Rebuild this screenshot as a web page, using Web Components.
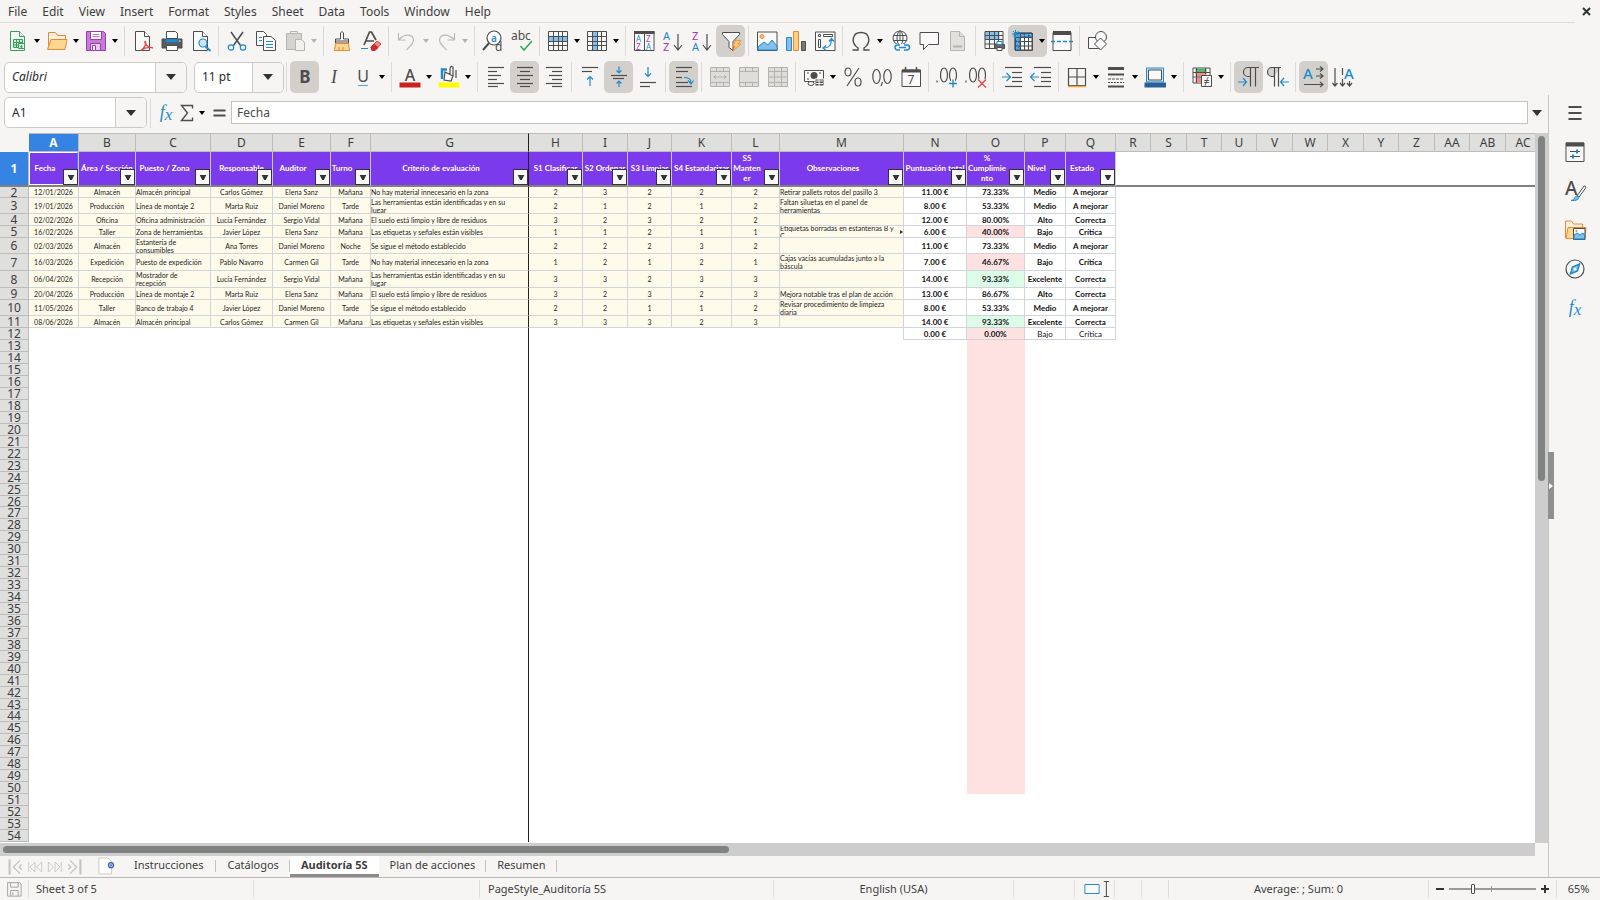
<!DOCTYPE html>
<html lang="en">
<head>
<meta charset="utf-8">
<title>Auditoría 5S - LibreOffice Calc</title>
<style>
html,body{margin:0;height:100%}
body{background:#f6f5f4;color:#3d3d3d;font:12px/16px "Noto Sans","Open Sans",sans-serif;overflow:hidden}
</style>
</head>
<body>
<calc-app></calc-app>
<script>
const K='#4d4d4d',B='#1e8bcd',L='#83beec',O='#ed8733',G='#b4b3b1';
const T=(x,y,s,t,c=K,extra='')=>`<text x="${x}" y="${y}" font-size="${s}" fill="${c}" stroke="none" ${extra}>${t}</text>`;
const P=(d,c=K,f='none',w=1)=>`<path d="${d}" stroke="${c}" fill="${f}" stroke-width="${w}"/>`;
const grid=c=>P('M2.5 2.5h19v19h-19zM7.5 2.5v19M12.5 2.5v19M16.5 2.5v19M2.5 7.5h19M2.5 12.5h19M2.5 16.5h19',c,'none');
const doc=(c,f='#fafafa')=>P('M4.5 2.5h9l5 5v14h-14z',c,f)+P('M13.5 2.5v5h5',c,f);
const lines=(a,c=K)=>a.map(([x,w,y])=>`<path d="M${x} ${y}.5h${w}" stroke="${c}" stroke-width="1.2" fill="none"/>`).join('');
const mergeIc=m=>P('M2.5 2.5h19v19h-19zM2.5 6.5h19M2.5 17.5h19M8.5 2.5v4M15.5 2.5v4M8.5 17.5v4M15.5 17.5v4','#b5b3b0','#dfddda')+m;
const ICONS={
new:doc('#3a9e5a','#f4fbf6')+P('M7.5 10.5h9v8h-9zM10.5 10.5v8M13.5 10.5v8M7.5 13.5h9M7.5 16h6','#3a9e5a','#cdebd6')+P('M12.5 14.5h6v5h-6z','#3a9e5a','#dff3e5')+P('M14 17.5l2-1.5v3z','#3a9e5a','#3a9e5a',.5),
open:P('M3.5 20.5v-17h7l2 3h8v4',O,'#fdf1e2')+P('M2.5 20.5l3.5-10h16l-2 10z',O,'#fbd88f'),
save:P('M2.5 2.5h17l2 2v17h-19z','#9a3fae','#c77bd6')+P('M6.5 2.5h11v8h-11z','#9a3fae','#fff')+P('M8.5 5.5h7M8.5 7.5h7','#c77bd6')+P('M6.5 21.5v-7h10v7z','#9a3fae','#e7c8ee')+P('M8.5 16.5h3v5h-3z','#9a3fae','#fff'),
pdf:doc(K)+P('M10 21.5c4-3 5.5-7 4.5-9c-1.5-1-1 5 7.5 6.5c-3-1-8-.5-12 2.5z','#e04848','none',1.3),
print:P('M6.5 2.5h9l2 2v5h-11z',K,'#fafafa')+P('M2 10h20v9h-20z',K,'#5a5a5a')+P('M6 10.5h12v2.5h-12z',B,B,.8)+P('M6.5 16.5h11v5h-11z',K,'#fff')+P('M19 12h1.5','#fff'),
preview:doc(K)+P('M16.5 17.5l5 4.5',B,'none',2)+`<circle cx="14" cy="14" r="4" fill="#cfe6f8" stroke="${B}" stroke-width="1.2"/>`,
cut:P('M6 3l9.5 13.5M18 3L8.5 16.5',K,'none',1.5)+`<g fill="none" stroke="${B}" stroke-width="1.2"><circle cx="6" cy="18.5" r="2.7"/><circle cx="18" cy="18.5" r="2.7"/></g>`,
copy:P('M2.5 2.5h7l3 3v11h-10z',K,'#fafafa')+P('M9.5 7.5h7.5l4.5 4v10h-12z',K,'#fafafa')+P('M5 8.5h3M5 11.5h3',B)+P('M12 12.5h7M12 15.5h7M12 18.5h7',B),
paste:P('M3.5 4.5h15v16h-15z','#b7b5b2','#d5d3d0')+P('M7.5 4.5v-2h7v2z','#b7b5b2','#eee')+P('M12.5 10.5h6l3 3v8h-9z','#b7b5b2','#f2f1f0'),
brush:P('M10.5 10v-6q1.5-3 3 0v6h5v4h-13v-4z',K,'#fafafa')+P('M5.5 14.5h13l1 7h-15z',O,'#fbd88f')+P('M9 21v-3M13 21v-3',O)+P('M5.5 12h13'),
clear:P('M5 16L10.5 3h2L17 11M7 12h8',K,'none',1.7)+P('M2 19.5h7',B)+P('M12 18l6-6 4 3-6 6.5h-3z','#e04848','#f28a8a')+P('M12 18l3-3 4 3.5-3 3h-3z','#c92d2d','#c92d2d'),
undo:P('M3.5 4v7h7M4 10.5C10 4 18 5 18.5 11c0 3-2 5-7 10','#bcbab8','none',1.2),
redo:P('M20.5 4v7h-7M20 10.5C14 4 6 5 5.5 11c0 3 2 5 7 10','#bcbab8','none',1.2),
find:`<circle cx="13" cy="9" r="7" fill="#fff" stroke="${K}" stroke-width="1.2"/>`+P('M8 14l-6 7',K,'none',2)+T(10,13,10,'a',B,'font-weight="600"')+T(14,22,12,'d'),
spell:T(1,11,12,'abc')+P('M10.5 17l3.5 4 8-9','#35a853','none',1.5),
row:P('M2.5 7.5h19v5h-19z',L,L)+grid(K),
col:P('M7.5 2.5h5v19h-5z',L,L)+grid(K),
sort:P('M2.5 2.5h19.5v19h-19.5zM12.5 4v18',K,'#fafafa')+P('M2 3.5h20.5',K,'none',3)+T(4,13,8,'A',B)+T(4,21,8,'Z','#a33ab5')+T(14,13,8,'Z','#a33ab5')+T(14,21,8,'A',B),
asc:T(2,11,11,'A',B)+T(2,22,11,'Z','#a33ab5')+P('M17 5v16M13 16l4 5 4-5',K,'none',1.2),
desc:T(2,11,11,'Z','#a33ab5')+T(2,22,11,'A',B)+P('M17 5v16M13 16l4 5 4-5',K,'none',1.2),
filter:P('M3.5 3.5h17v2l-6.5 7v9l-4-3v-6l-6.5-7z',K,'#fafafa')+P('M17 11l5 .5-3 3.5h3l-8 7 2-5h-3z',O,'#fbc56b',.8),
image:P('M2.5 3h19.5v18.5h-19.5z',K,'#fafafa')+P('M3 21v-3l6-5 4 3 4-5 5 6v4z',B,L)+`<circle cx="7" cy="7.5" r="2" fill="#fbc56b" stroke="${O}"/>`,
chart:P('M2.5 8.5h5v13h-5z',B,L)+P('M9.5 2.5h5v19h-5z',O,'#fbd07d')+P('M17.5 12.5h4v9h-4z',K,'#777'),
pivot:P('M2.5 3h19.5v18.5h-19.5z',K,'#fafafa')+P('M5.5 5.5h2v2h-2zM10.5 5.5h9v2h-9zM5.5 10.5h2v8h-2z')+P('M10 19c7 0 8-3 8.5-9M16 12.5l2.5-3 2.5 3M13 16.5l-3 2.5 3 2.5',B,'none',1.2),
omega:P('M3.5 21h5.5v-2C1.5 14 3 3.5 12 3.5s10.5 10.5 3 15.5v2h5.5',K,'none',1.4),
link:`<g fill="#fafafa" stroke="${K}"><circle cx="12" cy="9" r="7"/><ellipse cx="12" cy="9" rx="3" ry="7"/></g>`+P('M5.5 6.5h13M5.5 11.5h13M12 2v10')+P('M7 15.5h15v6h-15z','#f6f5f4','#f6f5f4')+P('M12 16H9.5a2.5 2.5 0 0 0 0 5H12M16 16h3a2.5 2.5 0 0 1 0 5h-3M11 18.5h7',B,'none',1.5),
comment:P('M3 3.5h18.5v12h-10l-5 5v-5H3z',K,'#fafafa'),
header:doc('#b7b5b2','#e2e0dd')+P('M7 17.5h9',G,'none',2),
parea:P('M3 3h14v7H3z',L,L)+P('M3 2.5h18v17h-18zM7.5 2.5v17M12.5 2.5v17M16.5 2.5v17M3 6.5h18M3 10.5h18M3 15h18')+P('M12.5 15.5h10v4h-10z',K,'#666')+P('M15 12.5h5v3h-5z',B,'#fff')+P('M15 18.5h5v3h-5z',K,'#fff'),
freeze:P('M4 4h17v17H4z',K,'#fafafa')+P('M4 4h17v4H9v13H4z','#1a6fb5','#5aa8e6')+P('M4.5 4.5h17v17h-17zM9.5 4v17M13.5 4v17M17.5 4v17M4.5 8.5h17M4.5 12.5h17M4.5 17h17')+P('M4.5 1v8M1 5h8M2 2l5.5 5.5M7.5 2L2 7.5M5 11l4 4M5 16l4 4M12 5l3 3M17 5l3 3',B),
split:P('M3 3.5h18v18h-18z',K,'#fafafa')+P('M3 4h18',K,'none',4)+P('M1 12.5h22',B,'none',1.5).replace('<path','<path stroke-dasharray="4 2"'),
shapes:P('M2.5 8.5h11v11h-11z',K,'#fafafa')+`<circle cx="15" cy="8" r="5.5" fill="#fafafa" stroke="${K}"/>`+P('M14.5 9l6 6-6 6-6-6z',K,'#fafafa'),
bold:T(12,18,17,'B',K,'font-weight="700" text-anchor="middle"'),
italic:T(12,18,18,'I',K,'font-style="italic" text-anchor="middle" font-family="Liberation Serif"'),
underline:T(12,17,16,'U',K,'text-anchor="middle"')+P('M7 20.5h10','#6aa8dc','none',1.2),
fcolor:T(12,16,16,'A',K,'text-anchor="middle" font-weight="500"')+P('M1.5 20h21','#c9211e','none',5),
hcolor:P('M8 7l8 4-2 5-7-1zM16 11V2q-3-2-3 3v4M19 5v8',K,'#fafafa',1.2)+P('M5 14V4.5h5',B,'none',2.5)+P('M1.5 20h21','#ff0','none',5),
left:lines([[4,16,2],[4,9,6],[4,13,10],[4,9,14],[4,16,18],[4,10,21]]),
center:lines([[4,16,2],[7,10,6],[4,16,10],[7,10,14],[4,16,18],[7,10,21]]),
right:lines([[4,16,2],[10,10,6],[7,13,10],[10,10,14],[4,16,18],[10,10,21]]),
top:lines([[4,16,2],[4,10,6]])+P('M12 21v-9M9 14.5l3-3 3 3',B,'none',1.2),
mid:lines([[4,16,10],[6,11,13]])+P('M12 1.5v6M9.5 5.5l2.5 2.5 2.5-2.5M12 22v-6M9.5 18.5l2.5-2.5 2.5 2.5',B,'none',1.2),
bot:lines([[4,16,17],[4,10,21]])+P('M12 2v9M9 8.5l3 3 3-3',B,'none',1.2),
wrap:lines([[4,16,2],[4,12,6],[4,6,12],[4,12,17],[4,16,21]])+P('M12 12.5q7 0 7 5M16 15.5l3 3.5 2.5-3.5',B,'none',1.2),
m1:mergeIc(P('M5 12h14M8 10l-2 2 2 2M16 10l2 2-2 2','#b5b3b0')),
m2:mergeIc(''),
m3:mergeIc(P('M8.5 6.5v11M15.5 6.5v11M2.5 12h19','#b5b3b0')),
money:P('M2.5 5.5h19v11h-19z',K,'#fafafa')+P('M5 8h2M17 8h2M5 14h2')+`<circle cx="12" cy="10.5" r="3.5" fill="${K}"/>`+P('M13 14h9v7h-9z','#f6f5f4',K)+P('M17 14v7M14 16h7M14 18.5h7','#f6f5f4')+`<ellipse cx="9" cy="18.5" rx="3" ry="2" fill="#fafafa" stroke="${K}"/>`,
percent:`<g fill="none" stroke="${K}" stroke-width="1.2"><ellipse cx="7" cy="7" rx="3" ry="4"/><ellipse cx="17" cy="17" rx="3" ry="4"/><path d="M18 3L6 21"/></g>`,
number:`<g fill="none" stroke="${K}" stroke-width="1.2"><ellipse cx="6.5" cy="11.5" rx="3.7" ry="7"/><ellipse cx="17.5" cy="11.5" rx="3.7" ry="7"/><path d="M12.5 17l-1.5 4"/></g>`,
date:P('M3 5h18.5v16.5H3z',K,'#fafafa')+P('M3 6h18.5',K,'none',3)+P('M6.5 2v5M17.5 2v5',K,'none',1.5)+T(12,19,12,'7',K,'text-anchor="middle"'),
dadd:`<g fill="none" stroke="${K}" stroke-width="1.2"><ellipse cx="9" cy="10" rx="3.5" ry="7"/><ellipse cx="18" cy="10" rx="3.5" ry="7"/><path d="M2 15.5v2"/></g>`+P('M18 14.5v8M14 18.5h8','#f6f5f4','none',4)+P('M18 14.5v8M14 18.5h8',B,'none',1.4),
ddel:`<g fill="none" stroke="${K}" stroke-width="1.2"><ellipse cx="9" cy="10" rx="3.5" ry="7"/><ellipse cx="18" cy="10" rx="3.5" ry="7"/><path d="M2 15.5v2"/></g>`+P('M14 14.5l8 8M22 14.5l-8 8','#f6f5f4','none',3)+P('M14 14.5l8 8M22 14.5l-8 8','#e04848','none',1.4),
ind:lines([[5,17,2],[12,10,7],[12,10,12],[12,10,16],[5,17,21]])+P('M2 12h8M6.5 8l4 4-4 4',B,'none',1.2),
outd:lines([[5,17,2],[12,10,7],[12,10,12],[12,10,16],[5,17,21]])+P('M10 12H2M5.5 8l-4 4 4 4',B,'none',1.2),
border:P('M3.5 3.5h17v17h-17zM12 3v18M3 12h18',K,'none',1.2)+P('M3 21.5h18','#f7a44a','none',1.5),
bstyle:P('M4 3.5h16',K,'none',3)+P('M4 9.5h16',K,'none',2)+P('M4 14h16',K).replace('<path','<path stroke-dasharray="3 1"')+P('M4 17.5h16',K).replace('<path','<path stroke-dasharray="2 1"')+P('M4 21.5h16',K,'none',2),
bcolor:P('M3.5 3h17v14h-17z',B,'#cfe6f8')+P('M5.5 5h13v10h-13z',K,'#fafafa')+P('M1.5 20h21.5','#2a6099','none',5),
cond:P('M3 3h17v15H3z',K,'#fafafa')+P('M6 4h10v3H6z','#58b56d','#58b56d')+P('M6 8h10v3H6zM6 13h6v4H6z','#f28a8a','#f28a8a')+P('M6.5 3v15M15.5 3v6M3 7.5h17M3 12h9')+P('M11.5 10.5h10v11h-10z',K,'#fafafa')+T(16.5,20,10,'≠',K,'text-anchor="middle"'),
ltr:P('M22 2.5H11a4.5 4.5 0 0 0 0 9h2M13.5 2.5v19M18.5 2.5v19',K,'none',1.2)+P('M1 17h8M6 13l3.5 4L6 21',B,'none',1.2),
rtl:P('M15 2.5H6a4.5 4.5 0 0 0 0 9h2',K,'#d5d3d0',1.2)+P('M8.5 2.5v19M12.5 2.5v19',K,'none',1.2)+P('M23 17h-8M18 13l-3.5 4 3.5 4',B,'none',1.2),
th:T(1,14,15,'A',B,'font-weight="500"')+P('M14 4h6M14 11h6M2 19.5h18M18 1.5l3 2.5-3 2.5M18 8.5l3 2.5-3 2.5M18 17l3 2.5-3 2.5',K,'none',1.2),
tv:T(13,14,15,'A',B,'font-weight="500"')+P('M4 3v18M11.5 3v7M11.5 14v7M18.5 16v5M1.5 18l2.5 3 2.5-3M9 18l2.5 3 2.5-3M16 18l2.5 3 2.5-3',K,'none',1.2),
fx:T(12,17,18,'<tspan>f</tspan><tspan dy="2" font-size="17">x</tspan>',B,'font-style="italic" text-anchor="middle" font-family="Liberation Serif" font-weight="400"'),
sum:P('M17.5 7.5V4.5h-11l6 7.5-6 7.5h11v-3',K,'none',1.4),
eq:P('M6.5 9.5h12M6.5 14.5h12',K,'none',2.2),
menu:P('M5.5 6h13M5.5 12h13M5.5 18h13',K,'none',2),
props:P('M3 3h18v18.5H3z',K,'#fafafa')+P('M3 4.5h18',K,'none',4)+P('M7 11.5h10M7 16.5h10')+P('M14 9.5v4M10 14.5v4',B,'none',2),
styles:T(2,16,19,'A',K,'font-weight="500"')+P('M14 17l7-10q3 0 1 3l-6 8z',K,'#fafafa')+P('M8 21.5q3 0 4-3t4-.5q0 4-8 3.5z',B,L),
gallery:P('M2.5 20v-17h6l2 3h9v3',O,'#fdf1e2')+P('M3 20.5l2-11h18l-1 11z',O,'#fbd88f')+P('M10.5 10.5h11.5v11h-11.5z',K,'#fafafa')+P('M11 21v-4l3-2 3 2 3-2 1.5 2v4z',B,L)+`<circle cx="13.5" cy="13" r="1" fill="${O}"/>`,
nav:`<circle cx="12" cy="12" r="9" fill="#fafafa" stroke="${K}" stroke-width="1.2"/>`+P('M16.5 7l-2 7-7 3 2-7z',B,L,1.5)+`<circle cx="12" cy="12" r="1.5" fill="#fff"/>`,
docsave:P('M3.5 3.5h16l2 2v16h-18z','#8a8a88')+P('M7.5 3.5v6h10v-6M7.5 21v-7h10v7M10.5 16.5v4','#8a8a88'),
first:P('M5.5 3v18','#c4c3c1','none',2.5)+P('M18 4l-8 8 8 8M20 9l-3 3 3 3','#c4c3c1','none',1.5),
prev:P('M4.5 6v12','#c4c3c1')+P('M12 6v12l-6-6zM20 6v12l-6-6z','#c4c3c1'),
next:P('M19.5 6v12','#c4c3c1')+P('M4 6v12l6-6zM12 6v12l6-6z','#c4c3c1'),
last:P('M18.5 3v18','#c4c3c1','none',2.5)+P('M6 4l8 8-8 8M4 9l3 3-3 3','#c4c3c1','none',1.5),
add:P('M3.5 2.5h11l4 4v15h-15z','#c4c3c1','#fff')+`<circle cx="18" cy="11" r="3" fill="#fff" stroke="#2a5fb0" stroke-width="1.5"/>`+P('M16 11h4M18 9v4','#2a5fb0'),
sel:P('M2.5 6h19v12h-19z',B,'#fafafa',1.3),
cursor:P('M9 2h7M9 22h7M12.5 2v20',K,'none',1.4)
};
const define=(name,css,html,fn)=>{
  const t=document.createElement('template');
  t.innerHTML=`<style>*{box-sizing:border-box}button{font:inherit;color:inherit;border:0;background:none;padding:0;margin:0}${css}</style>${html}`;
  customElements.define(name,class extends HTMLElement{
    connectedCallback(){
      if(this.shadowRoot)return;
      const f=t.content.cloneNode(true);
      if(fn)fn(this,f);
      this.attachShadow({mode:'open'}).append(f);
    }
  });
};

define('ui-icon',`:host{display:block;width:24px;height:24px;flex:none}svg{display:block;width:100%;height:100%;font-family:"Noto Sans",sans-serif;overflow:visible}`,
 `<svg viewBox="0 0 24 24" aria-hidden="true"></svg>`,(h,r)=>{r.querySelector('svg').innerHTML=ICONS[h.getAttribute('name')]||''});

define('tool-button',`:host{display:flex;flex:none;height:32px;border-radius:5px}
 :host([pressed]){background:#d3d0cc}
 .main{width:29px;display:grid;place-items:center}
 .dd{display:none;width:10px;place-items:center;color:#000}
 :host([menu]) .dd{display:grid}:host([off]) .dd{color:#b4b3b1}
 .dd svg{width:6px;height:4px}`,
 `<button class="main"><ui-icon></ui-icon></button><button class="dd"><svg viewBox="0 0 6 4"><path d="M0 0h6L3 4z" fill="currentColor"/></svg></button>`,
 (h,r)=>{
  const n=h.getAttribute('name'),m=r.querySelector('.main'),d=r.querySelector('.dd');
  r.querySelector('ui-icon').setAttribute('name',n);
  m.setAttribute('aria-label',h.getAttribute('label')||n);
  d.setAttribute('aria-label',(h.getAttribute('label')||n)+' options');
  if(h.hasAttribute('off')){m.disabled=true;d.disabled=true}
 });

define('tool-group',`:host{display:flex;flex:none;align-items:center}
 :host(:not([last]))::after{content:"";width:1px;height:30px;margin:0 3px;background:#dcdad8}
 :host([wide])::after{margin:0 3px 0 4px}`,`<slot></slot>`);

define('combo-box',`:host{display:flex;height:31px;border:1px solid #cdc9c5;border-radius:5px;background:#fff;overflow:hidden;flex:none}
 input{flex:1;min-width:0;border:0;outline:0;background:none;padding:0 0 0 7px;font:inherit;color:#2a2a2a}
 button{width:31px;border-left:1px solid #cdc9c5;background:#f6f5f4;display:grid;place-items:center;color:#2e3436}
 svg{width:10px;height:6px}`,
 `<input><button><svg viewBox="0 0 10 6"><path d="M0 0h10L5 6z" fill="currentColor"/></svg></button>`,
 (h,r)=>{const i=r.querySelector('input');i.setAttribute('value',h.getAttribute('value'));i.setAttribute('aria-label',h.getAttribute('label'));
  r.querySelector('button').setAttribute('aria-label','Open '+h.getAttribute('label'))});

define('menu-bar',`:host{display:flex;align-items:center;height:23px;padding-right:3px}
 nav{display:flex;flex:1;height:22px;align-items:center;padding-top:1px;border-bottom:1px solid #dcdad8}
 button{padding:0 7px 0 8px}
 .x{width:22px;height:22px;padding:0;display:grid;place-items:center}
 svg{width:9px;height:9px}`,
 `<nav></nav><button class="x" aria-label="Close document"><svg viewBox="0 0 9 9"><path d="M1 1l7 7M8 1L1 8" stroke="#2e3436" stroke-width="2"/></svg></button>`,
 (h,r)=>{r.querySelector('nav').innerHTML='File,Edit,View,Insert,Format,Styles,Sheet,Data,Tools,Window,Help'.split(',').map(s=>`<button>${s}</button>`).join('')});

const bar=groups=>groups.map((g,i)=>{
  const items=g.split(' '),lastItem=items[items.length-1];
  const html=items.map(s=>{const n=s.replace(/[!*-]/g,'');return `<tool-button name="${n}"${s.includes('*')?' menu':''}${s.includes('!')?' pressed':''}${s.includes('-')?' off':''}></tool-button>`}).join('');
  return `<tool-group${i===groups.length-1?' last':''}${lastItem.includes('*')?' wide':''}>${html}</tool-group>`}).join('');

define('standard-toolbar',`:host{display:flex;align-items:center;height:32px;padding-left:3px}`,
 bar(['new* open* save*','pdf print preview','cut copy paste*-','brush clear','undo*- redo*-','find spell','row* col*','sort asc desc filter!','image chart pivot','omega* link comment header-','parea freeze*! split','shapes']));

define('format-toolbar',`:host{display:flex;align-items:center;height:32px;padding-left:4px}
 .name{width:183px;font-style:italic}.size{width:90px;margin:0 2px 0 7px}.sep{width:1px;height:30px;background:#dcdad8;margin-right:3px}`,
 `<combo-box class="name" value="Calibri" label="Font name"></combo-box><combo-box class="size" value="11 pt" label="Font size"></combo-box><span class="sep"></span>`+
 bar(['bold! italic underline*','fcolor* hcolor*','left center! right','top mid! bot','wrap!','m1- m2- m3-','money* percent number date','dadd ddel','ind outd','border* bstyle* bcolor*','cond*','ltr! rtl','th! tv']));

define('formula-bar',`:host{display:flex;align-items:center;height:31px;padding-left:4px}
 combo-box{width:143px}.sep{width:1px;height:30px;background:#dcdad8;margin:0 3px}
 .b{width:21px;height:24px;display:grid;place-items:center}.dd{width:11px}.dd svg{width:6px;height:4px}
 .in{flex:1;min-width:0;height:23px;border:1px solid #c4c2bf;background:#fff;padding:0 5px;font:inherit;color:#4a4a4a;outline:0}
 .ex{width:20px;padding-right:2px}.ex svg{width:10px;height:6px}.b.eq{width:24px}`,
 `<combo-box value="A1" label="Name box"></combo-box><span class="sep"></span>
 <button class="b" aria-label="Function wizard"><ui-icon name="fx"></ui-icon></button>
 <button class="b" aria-label="Select function"><ui-icon name="sum"></ui-icon></button>
 <button class="b dd" aria-label="Function list"><svg viewBox="0 0 6 4"><path d="M0 0h6L3 4z"/></svg></button>
 <button class="b eq" aria-label="Formula"><ui-icon name="eq"></ui-icon></button>
 <input class="in" value="Fecha" aria-label="Input line">
 <button class="b ex" aria-label="Expand formula bar"><svg viewBox="0 0 10 6"><path d="M0 0h10L5 6z" fill="#2e3436"/></svg></button>`);

const COLS='A,B,C,D,E,F,G,H,I,J,K,L,M,N,O,P,Q,R,S,T,U,V,W,X,Y,Z,AA,AB,AC'.split(',');
const CW=[50,57,75,62,58,40,158,54,45,44,60,48,124,63,58,41,50,35,36,35,35,36,35,36,35,36,35,36,35];
const HEAD=['Fecha','*Área / Sección','Puesto / Zona','*Responsable','Auditor','Turno','Criterio de evaluación','*S1 Clasificar','*S2 Ordenar','*S3 Limpiar','*S4 Estandarizar','S5<br>Manten<br>er','Observaciones','*Puntuación total','%<br>Cumplimie<br>nto','Nivel','Estado'];
const H1='No hay material innecesario en la zona',H2='Las herramientas están identificadas y en su lugar',H3='El suelo está limpio y libre de residuos',H4='Las etiquetas y señales están visibles',H5='Se sigue el método establecido';
const DATA=[
['12/01/2026','Almacén','Almacén principal','Carlos Gómez','Elena Sanz','Mañana',H1,2,3,2,2,2,'Retirar pallets rotos del pasillo 3','11.00 €','73.33%','Medio','A mejorar'],
['19/01/2026','Producción','Línea de montaje 2','Marta Ruiz','Daniel Moreno','Tarde',H2,2,1,2,1,2,'Faltan siluetas en el panel de herramientas','8.00 €','53.33%','Medio','A mejorar'],
['02/02/2026','Oficina','Oficina administración','Lucía Fernández','Sergio Vidal','Mañana',H3,3,2,3,2,2,'','12.00 €','80.00%','Alto','Correcta'],
['16/02/2026','Taller','Zona de herramientas','Javier López','Elena Sanz','Mañana',H4,1,1,2,1,1,'Etiquetas borradas en estanterías B y C','6.00 €','40.00%','Bajo','Crítica'],
['02/03/2026','Almacén','Estantería de<br>consumibles','Ana Torres','Daniel Moreno','Noche',H5,2,2,2,3,2,'','11.00 €','73.33%','Medio','A mejorar'],
['16/03/2026','Expedición','Puesto de expedición','Pablo Navarro','Carmen Gil','Tarde',H1,1,2,1,2,1,'Cajas vacías acumuladas junto a la báscula','7.00 €','46.67%','Bajo','Crítica'],
['06/04/2026','Recepción','Mostrador de<br>recepción','Lucía Fernández','Sergio Vidal','Mañana',H2,3,3,2,3,3,'','14.00 €','93.33%','Excelente','Correcta'],
['20/04/2026','Producción','Línea de montaje 2','Marta Ruiz','Elena Sanz','Mañana',H3,3,2,3,2,3,'Mejora notable tras el plan de acción','13.00 €','86.67%','Alto','Correcta'],
['11/05/2026','Taller','Banco de trabajo 4','Javier López','Daniel Moreno','Tarde',H5,2,2,1,1,2,'Revisar procedimiento de limpieza diaria','8.00 €','53.33%','Medio','A mejorar'],
['08/06/2026','Almacén','Almacén principal','Carlos Gómez','Carmen Gil','Mañana',H4,3,3,3,2,3,'','14.00 €','93.33%','Excelente','Correcta']];
const RH=[11,16,12,12,16,17,17,12,16,12];
function sheet(){
  let s='<colgroup><col style="width:29px">'+CW.map(w=>`<col style="width:${w}px">`).join('')+'</colgroup><thead><tr><td class="corner"></td>'+
   COLS.map((c,i)=>`<th scope="col" class="${i?'':'on'}${i===6?' fz':''}">${c}</th>`).join('')+'</tr></thead><tbody>';
  s+='<tr class="r1"><th scope="row" class="on">1</th>'+HEAD.map((t,i)=>{const w=t[0]==='*';
   return `<td class="h${i===6?' fz':''}${i?'':' cur'}"><div class="t${w?' o':''}"><span>${w?t.slice(1):t}</span></div><button aria-label="Filter ${COLS[i]}"><svg viewBox="0 0 8 6"><path d="M0 0h8L5 6H3z"/></svg></button></td>`}).join('')+'<td colspan="12"></td></tr>';
  DATA.forEach((d,r)=>{
   s+=`<tr style="height:${RH[r]}px;--h:${RH[r]-1}px"><th scope="row"><div>${r+2}</div></th>`+d.map((v,i)=>{
    const c=['c'];if(i>12)c.push('n');if([2,6,12].includes(i))c.push('l');if(i===6)c.push('fz');
    if(i===6||i===12)c.push('w');
    if(i===14){const p=parseFloat(v);if(p<50)c.push('red');if(p>90)c.push('green')}
    if(i===12&&r===3)c.push('over');
    return `<td class="${c.join(' ')}"><div><span>${v}</span></div></td>`}).join('')+'<td colspan="12"></td></tr>'});
  s+=`<tr style="height:12px;--h:11px"><th scope="row"><div>12</div></th><td colspan="7" class="fz"></td><td colspan="6" class="edge"></td><td class="c n"><div>0.00 €</div></td><td class="c n red"><div>0.00%</div></td><td class="c n reg"><div>Bajo</div></td><td class="c n reg"><div>Crítica</div></td><td colspan="12"></td></tr>`;
  let y=340;
  for(let r=13;r<=54;r++){const e=Math.round(340.3+(r-12)*11.94),h=e-y;y=e;
   s+=`<tr style="height:${h}px;--h:${h-1}px"><th scope="row"><div>${r}</div></th><td colspan="7" class="fz"></td><td colspan="7"></td><td class="${r<51?'pk':''}"></td><td colspan="14"></td></tr>`}
  return s+'</tbody>';
}
define('sheet-grid',`:host{display:block;flex:1;min-height:0;min-width:0;overflow:hidden;background:#fff}
 table{table-layout:fixed;border-collapse:separate;border-spacing:0;width:0}
 td,th{padding:0}td{overflow:hidden}
 thead tr{height:19px}
 thead th{background:#dfdfde;border-right:1px solid #bdbcbb;border-bottom:1px solid #bdbcbb;border-top:1px solid #bdbcbb;font:12px/16px "Noto Sans",sans-serif}
 .corner{background:#f6f5f4}
 tbody th{background:#dfdfde;border-right:1px solid #bdbcbb;border-bottom:1px solid #bdbcbb;font:12px/12px "Noto Sans",sans-serif}
 tbody th div{height:var(--h);padding-top:1px;display:flex;align-items:center;justify-content:center}
 th.on{background:#3584e4;color:#fff;font-weight:700}
 .r1{height:35px}.r1 td,.r1 th{border-bottom:2px solid #808080}
 .h{background:#7c3aed;border-right:1px solid #c9c6e6;color:#fff;position:relative;vertical-align:top;font:700 8px/10px Lato,sans-serif}
 .h .t{height:33px;padding:0 17px 2px 0;display:flex;align-items:center;justify-content:center;text-align:center;white-space:nowrap;overflow:hidden}
 .h .o{padding-right:0}
 .h button{position:absolute;right:0;bottom:0;width:15px;height:16px;background:#f8f8f8;border:1px solid #333;display:grid;place-items:center}
 .h svg{width:8px;height:5px;fill:#333}
 .cur .t{border:1px solid #fff;border-right-color:#3584e4}
 .fz{border-right:1px solid #222!important}
 .c{background:#fffbeb;border-right:1px solid #d1d5db;border-bottom:1px solid #d1d5db;font:7px/8px Lato,sans-serif;color:#222}
 .c div{height:var(--h);display:flex;align-items:center;justify-content:center;text-align:center;overflow:hidden}
 .l div{justify-content:flex-start;text-align:left}
 .w div{padding-right:8px}
 .n{background:#fff;font:700 8px/10px Lato,sans-serif;color:#111}
 .reg{font-weight:400}.edge{border-right:1px solid #d1d5db}
 .red,.pk{background:#fee2e2}.green{background:#dcfce7}
 .over{position:relative}.over::after{content:"";position:absolute;right:0;top:4px;border:2px solid transparent;border-left:3px solid #333;border-right:0}`,
 `<table></table>`,(h,r)=>{r.querySelector('table').innerHTML=sheet()});

define('scroll-bar',`:host{display:block;background:#cdcdcd;flex:none}
 i{display:block;background:#7f8281;border-radius:4px}
 :host([v]){width:13px;padding:3px}:host([v]) i{height:49%;width:7px}
 :host([x]){height:13px;padding:3px}:host([x]) i{width:47.5%;height:7px}`,`<i></i>`);

define('sheet-tabs',`:host{display:flex;height:21px;align-items:stretch;font-size:11px;line-height:18px}
 .nav{display:flex;align-items:center;padding-left:5px;width:92px}
 .nav button{width:20px;height:20px}.nav ui-icon{width:20px;height:20px}
 .add{width:30px;height:20px}.add ui-icon{height:20px;width:20px;margin-left:4px}
 .tab{padding:0 11px;position:relative;border-bottom:3px solid transparent}
 .tab::after{content:"";position:absolute;right:0;top:4px;height:12px;width:1px;background:#c4c2bf}
 .on{background:#fff;font-weight:700;border-bottom-color:#8c8c8c}.on::after{display:none}
 .first{padding:0 13px 0 12px}`,
 `<div class="nav"><button aria-label="First sheet"><ui-icon name="first"></ui-icon></button><button aria-label="Previous sheet"><ui-icon name="prev"></ui-icon></button><button aria-label="Next sheet"><ui-icon name="next"></ui-icon></button><button aria-label="Last sheet"><ui-icon name="last"></ui-icon></button></div>
 <button class="add" aria-label="Add sheet"><ui-icon name="add"></ui-icon></button>
 <button class="tab first">Instrucciones</button><button class="tab">Catálogos</button><button class="tab on">Auditoría 5S</button><button class="tab">Plan de acciones</button><button class="tab">Resumen</button>`);

define('side-bar',`:host{display:flex;flex-direction:column;align-items:center;width:52px;flex:none;border-left:1px solid #c9c6c3;padding-top:6px;position:relative}
 button{width:24px;height:24px;margin-bottom:15px}
 .handle{position:absolute;left:-1px;top:calc(50% - 34px);width:6px;height:67px;background:#8f8f8e;margin:0;display:grid;place-items:center}
 .handle svg{width:4px;height:6px}`,
 `<button aria-label="Sidebar settings"><ui-icon name="menu"></ui-icon></button><button aria-label="Properties"><ui-icon name="props"></ui-icon></button><button aria-label="Styles"><ui-icon name="styles"></ui-icon></button><button aria-label="Gallery"><ui-icon name="gallery"></ui-icon></button><button aria-label="Navigator"><ui-icon name="nav"></ui-icon></button><button aria-label="Functions"><ui-icon name="fx"></ui-icon></button>
 <button class="handle" aria-label="Hide sidebar"><svg viewBox="0 0 4 6"><path d="M0 0l4 3-4 3z" fill="#fff"/></svg></button>`);

define('status-bar',`:host{display:flex;height:23px;flex:none;border-top:1px solid #bab7b4;font-size:11px;line-height:22px;align-items:stretch}
 div{border-right:1px solid #e0dedb;margin:2px 0;height:18px;line-height:18px;display:flex;align-items:center;justify-content:center;flex:none;white-space:nowrap}
 .s{width:29px}.s ui-icon,.i ui-icon{width:18px;height:18px}
 .a{width:225px;justify-content:flex-start;padding-left:7px}.b{width:226px}
 .p{flex:285 0 0;justify-content:flex-start;padding-left:8px}.e{flex:239 0 0}.g{width:61px}.i{width:40px;padding-left:8px;justify-content:flex-start}.i ui-icon+ui-icon{margin-left:-4px}.j{width:27px}
 .v{flex:259 0 0}.z{width:128px;gap:4px}.q{width:43px;border:0}
 .z button{width:10px;height:18px;display:grid;place-items:center}.z svg{width:10px;height:10px}
 input{appearance:none;width:87px;height:18px;margin:0;background:linear-gradient(#9a9a98,#9a9a98) center/100% 2px no-repeat,linear-gradient(#9a9a98,#9a9a98) 42px center/1px 6px no-repeat}
 input::-webkit-slider-thumb{appearance:none;width:4px;height:10px;background:#fafafa;border:1px solid #4d4d4d;border-radius:1px}`,
 `<div class="s"><ui-icon name="docsave"></ui-icon></div><div class="a">Sheet 3 of 5</div><div class="b"></div><div class="p">PageStyle_Auditoría 5S</div><div class="e">English (USA)</div><div class="g"></div><div class="i"><ui-icon name="sel"></ui-icon><ui-icon name="cursor"></ui-icon></div><div class="j"></div><div class="j"></div><div class="v">Average: ; Sum: 0</div>
 <div class="z"><button aria-label="Zoom out"><svg viewBox="0 0 10 10"><path d="M1 5h8" stroke="#333" stroke-width="2"/></svg></button><input type="range" min="0" max="100" value="27" aria-label="Zoom"><button aria-label="Zoom in"><svg viewBox="0 0 10 10"><path d="M1 5h8M5 1v8" stroke="#333" stroke-width="2"/></svg></button></div><div class="q">65%</div>`);

define('calc-app',`:host{display:flex;flex-direction:column;height:100vh;min-height:320px}
 .tools{display:flex;flex-direction:column;gap:4px;padding:2px 0;flex:none;overflow:hidden}
 .work{display:flex;flex:1;min-height:0}
 .main{flex:1;min-width:0;display:flex;flex-direction:column;padding-top:2px}
 formula-bar{margin-bottom:5px;flex:none}
 .area{display:grid;grid-template:minmax(0,1fr) 13px/minmax(0,1fr) 13px;flex:1;min-height:0}
 sheet-tabs{flex:none}`,
 `<menu-bar></menu-bar><div class="tools"><standard-toolbar></standard-toolbar><format-toolbar></format-toolbar></div>
 <div class="work"><div class="main"><formula-bar></formula-bar><div class="area"><sheet-grid></sheet-grid><scroll-bar v></scroll-bar><scroll-bar x></scroll-bar></div><sheet-tabs></sheet-tabs></div><side-bar></side-bar></div>
 <status-bar></status-bar>`);
</script>
</body>
</html>
